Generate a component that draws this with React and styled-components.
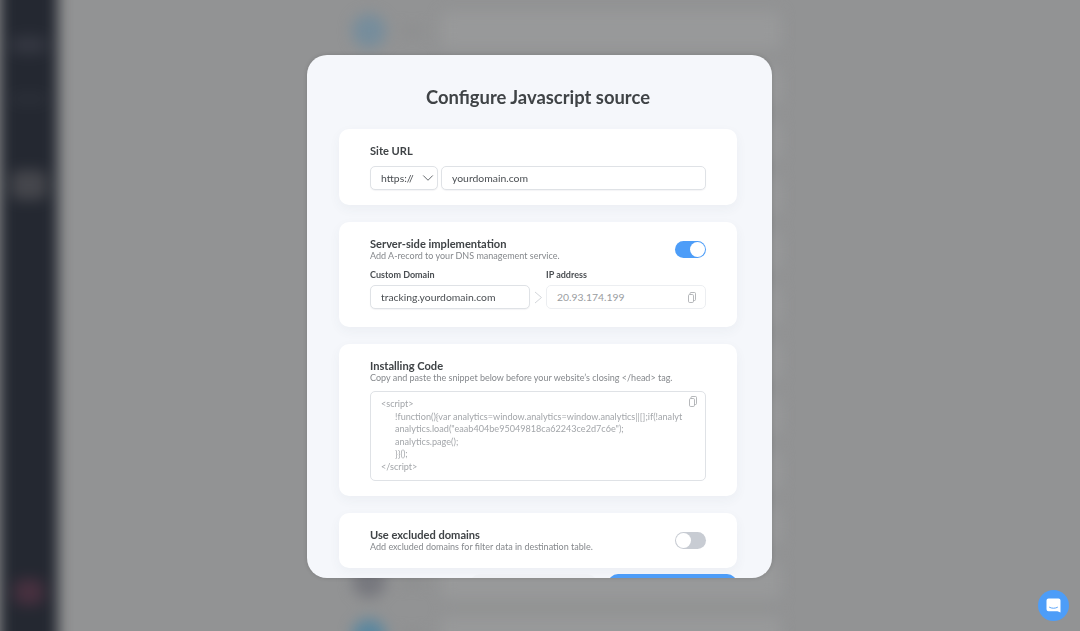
import React from 'react'
import styled, { createGlobalStyle } from 'styled-components'
import { ChevronDown } from 'lucide-react'

const GlobalStyle = createGlobalStyle`
    * { box-sizing: border-box; }
    html, body { margin: 0; height: 100%; overflow: hidden; }
    body { background: #929394; font-family: "Lato", "Liberation Sans", sans-serif; }
`

const Page = styled.div`
    display: flex;
    width: 1080px;
    height: 631px;
    overflow: hidden;
    background: #929394;
`

const BlurLayer = styled.div`
    display: flex;
    width: 100%;
    height: 100%;
    filter: blur(7px);
`

const Sidebar = styled.aside`
    display: flex;
    flex-direction: column;
    align-items: center;
    flex: 0 0 58px;
    margin: -20px 0;
    padding: 56px 0 0;
    background: #242831;
`

const SideBlob = styled.div`
    flex-shrink: 0;
    width: ${p => p.$w || 40}px;
    height: ${p => p.$h || 14}px;
    margin-top: ${p => p.$top}px;
    border-radius: 8px;
    background: ${p => p.$color};
`

const Main = styled.main`
    display: flex;
    flex-direction: column;
    flex: 1;
    gap: 18px;
    padding: 12px 290px 0 294px;
`

const ListRow = styled.div`
    display: flex;
    align-items: center;
    flex: 0 0 37px;
`

const RowDot = styled.div`
    flex: 0 0 34px;
    height: 34px;
    border-radius: 50%;
    background: ${p => p.$color};
`

const RowLabel = styled.div`
    flex: 0 0 22px;
    height: 8px;
    margin: 0 10px 0 15px;
    border-radius: 4px;
    background: #8c8d8e;
`

const RowCard = styled.div`
    flex: 0 0 340px;
    height: 100%;
    margin-left: 8px;
    border-radius: 6px;
    background: #98999a;
`

const Overlay = styled.div`
    position: fixed;
    inset: 0;
    display: flex;
    align-items: center;
    justify-content: center;
    padding: 2px 1px 0 0;
`

const Modal = styled.div`
    display: flex;
    flex-direction: column;
    width: 465px;
    height: 523px;
    padding: 0 35px 0 32px;
    overflow: hidden;
    border-radius: 20px;
    background: #f5f7fb;
    box-shadow: 0 0 4px rgba(0, 0, 0, 0.15);
`

const Title = styled.h1`
    margin: 30px 0 20px;
    font-size: 18.4px;
    line-height: 24px;
    font-weight: 700;
    text-align: center;
    color: #3f4346;
`

const Cards = styled.div`
    display: flex;
    flex-direction: column;
    flex-shrink: 0;
    gap: 17px;
`

const Card = styled.section`
    flex-shrink: 0;
    height: ${p => p.$height}px;
    padding: 15px 31px 0 31px;
    border-radius: 10px;
    background: #fff;
    box-shadow: 0 4px 12px rgba(60, 72, 100, 0.05);
`

const CardHead = styled.div`
    display: flex;
    align-items: flex-start;
    justify-content: space-between;
`

const CardTitle = styled.h2`
    margin: 0;
    font-size: 11.1px;
    line-height: 13px;
    font-weight: 700;
    color: #3f4346;
`

const CardText = styled.p`
    margin: 0;
    font-size: 9px;
    line-height: 11px;
    color: #85888c;
`

const UrlRow = styled.div`
    display: flex;
    gap: 3px;
    margin-top: 9px;
`

const Field = styled.div`
    display: flex;
    align-items: center;
    justify-content: space-between;
    flex: ${p => (p.$fixed ? `0 0 ${p.$fixed}px` : 1)};
    height: 24px;
    padding: 0 ${p => (p.$select ? 0 : 9)}px 0 10px;
    border: 1px solid ${p => (p.$muted ? '#eceef1' : '#dfe2e6')};
    border-radius: 5px;
    font-size: 10.4px;
    color: ${p => (p.$muted ? '#9a9da1' : '#4a4e52')};
    background: #fff;
    box-shadow: ${p => (p.$muted ? 'none' : '0 1px 1px rgba(60, 72, 100, 0.06)')};
`

const DomainGrid = styled.div`
    display: grid;
    grid-template-columns: 160px 16px 160px;
    grid-template-rows: auto 24px;
    margin-top: 8px;
`

const FieldLabel = styled.label`
    display: block;
    grid-column: ${p => p.$col};
    margin-bottom: 4px;
    font-size: 9px;
    line-height: 12px;
    font-weight: 700;
    color: #4a4e52;
`

const Arrow = styled.svg`
    justify-self: center;
    align-self: center;
    width: 9px;
    height: 13px;
`

const Toggle = styled.div`
    display: flex;
    align-items: center;
    justify-content: ${p => (p.$on ? 'flex-end' : 'flex-start')};
    flex: 0 0 31px;
    height: 17px;
    margin-top: 4px;
    padding: 1px;
    border-radius: 9px;
    background: ${p => (p.$on ? '#4d9df8' : '#c8ccd3')};

    &::after {
        content: "";
        width: 15px;
        height: 15px;
        border-radius: 50%;
        background: #fff;
    }
`

const CodeBox = styled.div`
    position: relative;
    height: 90px;
    margin-top: 8px;
    padding: 6px 10px;
    border: 1px solid #dfe2e6;
    border-radius: 5px;
`

const CodeLine = styled.div`
    height: 12.6px;
    padding-left: ${p => (p.$indent ? 14 : 0)}px;
    font-size: 9.1px;
    line-height: 12.6px;
    white-space: nowrap;
    color: #a3a6aa;
`

const CopyButton = styled.span`
    position: absolute;
    top: 4px;
    right: 8px;
    display: flex;
`

const Footer = styled.div`
    display: flex;
    flex-shrink: 0;
    justify-content: flex-end;
    gap: 11px;
    margin-top: 6px;
`

const FooterButton = styled.div`
    flex: 0 0 ${p => p.$width}px;
    height: 36px;
    border-radius: 10px;
    background: ${p => (p.$primary ? '#4d9df8' : '#eff1f5')};
`

const Launcher = styled.div`
    position: fixed;
    right: 11px;
    bottom: 10px;
    display: flex;
    align-items: center;
    justify-content: center;
    width: 31px;
    height: 31px;
    border-radius: 50%;
    background: #4d9df8;
`

const CopyIcon = () => (
    <svg width="8" height="11" viewBox="0 0 8 11" fill="none" stroke="#a3a6aa" strokeWidth="0.8">
        <rect x="0.5" y="2.5" width="5" height="8" rx="1.2" />
        <path d="M2 2.500V1.500a1 1 0 0 1 1-1h3.500a1 1 0 0 1 1 1v6a1 1 0 0 1-1 1h-1" />
    </svg>
)

const ChatIcon = () => (
    <svg width="15" height="15" viewBox="0 0 15 15">
        <path d="M2.5 0.5h10a2 2 0 0 1 2 2v12l-3-1.2h-9a2 2 0 0 1-2-2v-8.800a2 2 0 0 1 2-2z" fill="#fff" />
        <path d="M3.500 9.300c2.200 1.300 5.800 1.300 8 0" fill="none" stroke="#4d9df8" strokeWidth="0.9" strokeLinecap="round" />
    </svg>
)

const listRows = [
    '#768d9c', '#8a8c8e', '#8a8c8e', '#8a8c8e', '#8a8c8e', '#8a8c8e',
    '#8a8c8e', '#8a8c8e', '#8a8c8e', '#8a8c8e', '#77787e', '#5b879f',
]

const App = () => {
    return (
        <Page>
            <GlobalStyle />
            <BlurLayer>
                <Sidebar>
                    <SideBlob $top={0} $w={36} $h={18} $color="#343741" />
                    <SideBlob $top={40} $w={36} $h={10} $color="#2c3039" />
                    <SideBlob $top={66} $w={36} $h={30} $color="#45464c" />
                    <SideBlob $top={379} $w={30} $h={26} $color="#47303f" />
                </Sidebar>
                <Main>
                    {listRows.map((color, i) => (
                        <ListRow key={i}>
                            <RowDot $color={color} />
                            <RowLabel />
                            <RowCard />
                        </ListRow>
                    ))}
                </Main>
            </BlurLayer>

            <Overlay>
                <Modal>
                    <Title>Configure Javascript source</Title>
                    <Cards>
                        <Card $height={76}>
                            <CardTitle>Site URL</CardTitle>
                            <UrlRow>
                                <Field $fixed={68} $select>
                                    https://
                                    <ChevronDown size={18} strokeWidth={1.2} color="#55595d" />
                                </Field>
                                <Field>yourdomain.com</Field>
                            </UrlRow>
                        </Card>

                        <Card $height={105}>
                            <CardHead>
                                <div>
                                    <CardTitle>Server-side implementation</CardTitle>
                                    <CardText>Add A-record to your DNS management service.</CardText>
                                </div>
                                <Toggle $on />
                            </CardHead>
                            <DomainGrid>
                                <FieldLabel $col={1}>Custom Domain</FieldLabel>
                                <FieldLabel $col={3}>IP address</FieldLabel>
                                <Field>tracking.yourdomain.com</Field>
                                <Arrow viewBox="0 0 9 13">
                                    <path d="M1 1l6.500 5.500L1 12" fill="none" stroke="#d3d6da" strokeWidth="1" />
                                </Arrow>
                                <Field $muted>
                                    20.93.174.199
                                    <CopyIcon />
                                </Field>
                            </DomainGrid>
                        </Card>

                        <Card $height={152}>
                            <CardTitle>Installing Code</CardTitle>
                            <CardText>Copy and paste the snippet below before your website’s closing &lt;/head&gt; tag.</CardText>
                            <CodeBox>
                                <CopyButton><CopyIcon /></CopyButton>
                                <CodeLine>&lt;script&gt;</CodeLine>
                                <CodeLine $indent>!function(){'{'}var analytics=window.analytics=window.analytics||[];if(!analyt</CodeLine>
                                <CodeLine $indent>analytics.load("eaab404be95049818ca62243ce2d7c6e");</CodeLine>
                                <CodeLine $indent>analytics.page();</CodeLine>
                                <CodeLine $indent>{'}}'}();</CodeLine>
                                <CodeLine>&lt;/script&gt;</CodeLine>
                            </CodeBox>
                        </Card>

                        <Card $height={55}>
                            <CardHead>
                                <div>
                                    <CardTitle>Use excluded domains</CardTitle>
                                    <CardText>Add excluded domains for filter data in destination table.</CardText>
                                </div>
                                <Toggle />
                            </CardHead>
                        </Card>
                    </Cards>
                    <Footer>
                        <FooterButton $width={127} />
                        <FooterButton $width={129} $primary />
                    </Footer>
                </Modal>
            </Overlay>

            <Launcher><ChatIcon /></Launcher>
        </Page>
    )
}

export default App
